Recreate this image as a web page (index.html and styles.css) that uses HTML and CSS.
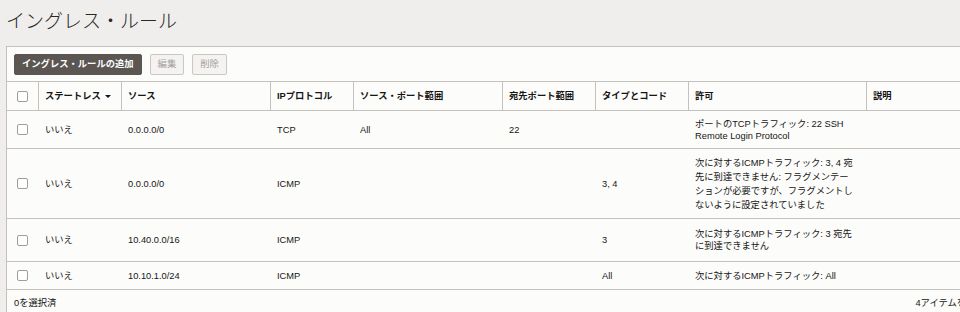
FILE: index.html
```html
<!DOCTYPE html>
<html lang="ja">
<head>
<meta charset="utf-8">
<title>イングレス・ルール</title>
<link rel="stylesheet" href="styles.css">
</head>
<body>
<h1 class="page-title">イングレス・ルール</h1>
<section class="panel">
  <div class="toolbar">
    <button class="btn btn-primary">イングレス・ルールの追加</button>
    <button class="btn btn-disabled">編集</button>
    <button class="btn btn-disabled">削除</button>
  </div>
  <div class="rules">
    <div class="row head">
      <div class="cell sel"><span class="checkbox"></span></div>
      <div class="cell">ステートレス<span class="caret"></span></div>
      <div class="cell">ソース</div>
      <div class="cell">IPプロトコル</div>
      <div class="cell">ソース・ポート範囲</div>
      <div class="cell">宛先ポート範囲</div>
      <div class="cell">タイプとコード</div>
      <div class="cell">許可</div>
      <div class="cell">説明</div>
    </div>
    <div class="row r1">
      <div class="cell sel"><span class="checkbox"></span></div>
      <div class="cell">いいえ</div>
      <div class="cell">0.0.0.0/0</div>
      <div class="cell">TCP</div>
      <div class="cell">All</div>
      <div class="cell">22</div>
      <div class="cell"></div>
      <div class="cell perm">ポートのTCPトラフィック: 22 SSH<br>Remote Login Protocol</div>
      <div class="cell"></div>
    </div>
    <div class="row r2">
      <div class="cell sel"><span class="checkbox"></span></div>
      <div class="cell">いいえ</div>
      <div class="cell">0.0.0.0/0</div>
      <div class="cell">ICMP</div>
      <div class="cell"></div>
      <div class="cell"></div>
      <div class="cell">3, 4</div>
      <div class="cell perm tall">次に対するICMPトラフィック: 3, 4 宛<br>先に到達できません: フラグメンテー<br>ションが必要ですが、フラグメントし<br>ないように設定されていました</div>
      <div class="cell"></div>
    </div>
    <div class="row r3">
      <div class="cell sel"><span class="checkbox"></span></div>
      <div class="cell">いいえ</div>
      <div class="cell">10.40.0.0/16</div>
      <div class="cell">ICMP</div>
      <div class="cell"></div>
      <div class="cell"></div>
      <div class="cell">3</div>
      <div class="cell perm">次に対するICMPトラフィック: 3 宛先<br>に到達できません</div>
      <div class="cell"></div>
    </div>
    <div class="row r4">
      <div class="cell sel"><span class="checkbox"></span></div>
      <div class="cell">いいえ</div>
      <div class="cell">10.10.1.0/24</div>
      <div class="cell">ICMP</div>
      <div class="cell"></div>
      <div class="cell"></div>
      <div class="cell">All</div>
      <div class="cell perm">次に対するICMPトラフィック: All</div>
      <div class="cell"></div>
    </div>
  </div>
  <div class="footer">
    <span>0を選択済</span>
    <span>4アイテムを表示中</span>
  </div>
</section>
</body>
</html>
```
FILE: styles.css
```css
html, body {
  margin: 0;
  padding: 0;
  overflow: hidden;
}
body {
  background: #efeeec;
  font-family: "Liberation Sans", "Noto Sans CJK JP", sans-serif;
  font-size: 9.3px;
  color: #161513;
  padding: 0 6px;
}
.page-title {
  margin: 0;
  padding-top: 8px;
  font-size: 19px;
  line-height: 24px;
  font-weight: 300;
  color: #2a2724;
  font-family: "Noto Sans CJK JP", sans-serif;
}
.panel {
  margin-top: 14px;
  width: 996px;
  box-sizing: border-box;
  border: 1px solid #c4c0bc;
  background: #fcfcfb;
}
.toolbar {
  display: flex;
  gap: 8px;
  padding: 7px 7px 6px;
  border-bottom: 1px solid #c4c0bc;
}
.btn {
  height: 21px;
  box-sizing: border-box;
  padding: 0 7px;
  border-radius: 2px;
  font-family: inherit;
  font-size: 9.3px;
  line-height: 19px;
}
.btn-primary {
  background: #5c5652;
  border: 1px solid #5c5652;
  color: #ffffff;
  font-weight: bold;
}
.btn-disabled {
  background: #f4f3f1;
  border: 1px solid #cbc7c3;
  color: #a5a19d;
}
.row {
  display: grid;
  grid-template-columns: 31px 83px 149px 83px 149px 93px 93px 178px 1fr;
  align-items: center;
  box-sizing: border-box;
  border-bottom: 1px solid #c4c0bc;
}
.cell {
  padding-left: 7px;
  line-height: 12px;
  white-space: nowrap;
}
.cell.sel {
  padding-left: 0;
  display: flex;
  justify-content: center;
}
.head {
  height: 29px;
  align-items: stretch;
  font-weight: bold;
}
.head .cell {
  display: flex;
  align-items: center;
  padding-left: 6px;
  border-left: 1px solid #c4c0bc;
}
.head .cell.sel {
  border-left: none;
  padding-left: 0;
  justify-content: center;
}
.r1 { height: 38px; }
.r2 { height: 70px; }
.r3 { height: 43px; }
.r4 { height: 28px; }
.perm.tall {
  line-height: 14px;
}
.checkbox {
  display: block;
  width: 11px;
  height: 11px;
  box-sizing: border-box;
  border: 1px solid #a19d99;
  border-radius: 2px;
  background: #ffffff;
}
.caret {
  display: inline-block;
  margin-left: 4px;
  width: 0;
  height: 0;
  border-left: 3px solid transparent;
  border-right: 3px solid transparent;
  border-top: 3px solid #161513;
}
.footer {
  display: flex;
  justify-content: space-between;
  padding: 6px 7px;
  line-height: 14px;
}
```
